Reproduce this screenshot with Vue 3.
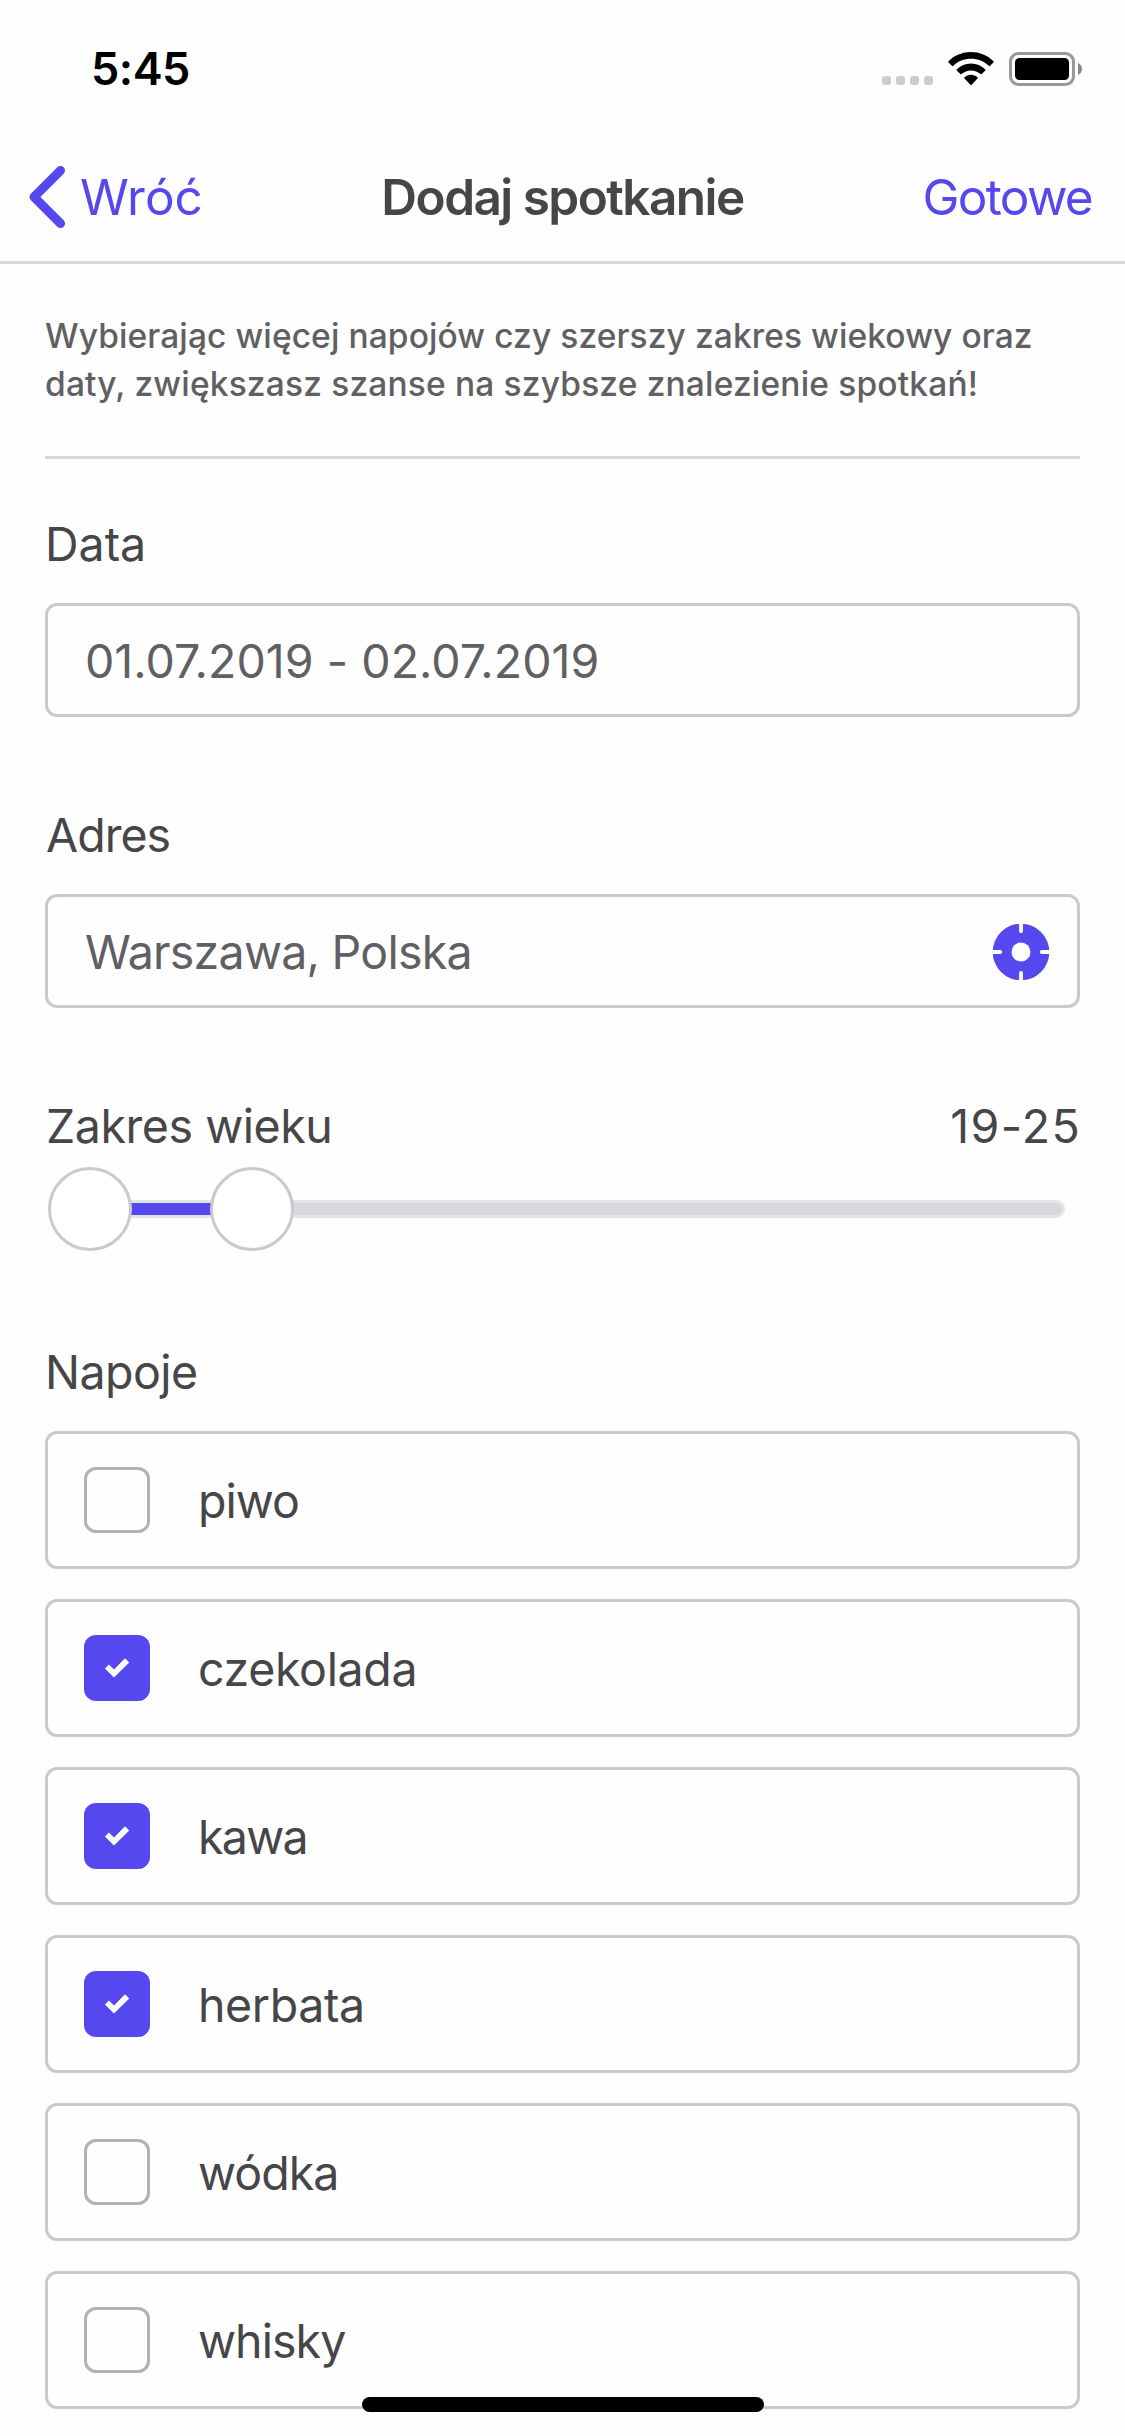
<script setup>
import { ref } from 'vue'

const drinks = ref([
  { name: 'piwo', checked: false, tracking: -1 },
  { name: 'czekolada', checked: true, tracking: -0.34 },
  { name: 'kawa', checked: true, tracking: -1.7 },
  { name: 'herbata', checked: true, tracking: -0.4 },
  { name: 'wódka', checked: false, tracking: -0.95 },
  { name: 'whisky', checked: false, tracking: -0.95 },
])

// Thumb centres, in pixels from the left edge of the slider
const range = { from: 45, to: 207 }
</script>

<template>
  <div class="screen">
    <header class="status">
      <span class="time">5:45</span>
      <div class="indicators">
        <span class="signal"><i v-for="n in 4" :key="n"></i></span>
        <svg class="wifi" width="46" height="34" viewBox="0 0 46 34">
          <path d="M23 0C31.7 0 39.7 3.4 45.5 9.2Q46 9.8 45.4 10.4L41.9 13.9Q41.4 14.4 40.8 13.8C36.1 9.3 29.9 6.8 23 6.8S9.9 9.3 5.2 13.8Q4.6 14.4 4.1 13.9L.6 10.4Q0 9.8.5 9.2C6.3 3.4 14.3 0 23 0Z" />
          <path d="M23 11.6C28.6 11.6 33.6 13.8 37.3 17.5Q37.8 18 37.3 18.6L33.7 22.1Q33.2 22.6 32.6 22.1C30 19.8 26.7 18.4 23 18.4S16 19.8 13.4 22.1Q12.8 22.6 12.3 22.1L8.7 18.6Q8.2 18 8.7 17.5C12.4 13.8 17.4 11.6 23 11.6Z" />
          <path d="M23 22.8C25.5 22.8 27.8 23.7 29.5 25.2Q30.1 25.8 29.5 26.4L23.6 32.7Q23 33.3 22.4 32.7L16.5 26.4Q15.9 25.8 16.5 25.2C18.2 23.7 20.5 22.8 23 22.8Z" />
        </svg>
        <svg class="battery" width="74" height="34" viewBox="0 0 74 34">
          <rect x="1.5" y="1.5" width="63" height="31" rx="8" fill="none" stroke="#999" stroke-width="3" />
          <rect x="6" y="6" width="54" height="22" rx="4.5" />
          <path d="M69 11C71.3 12 73 14.2 73 17S71.3 22 69 23Z" fill="#888" />
        </svg>
      </div>
    </header>

    <nav class="nav">
      <a class="back">
        <svg width="36" height="62" viewBox="0 0 36 62">
          <path d="M31.5 4.5L5 31L31.5 57.5" fill="none" stroke="currentColor" stroke-width="9" stroke-linecap="round" stroke-linejoin="round" />
        </svg>
        <span>Wróć</span>
      </a>
      <h1>Dodaj spotkanie</h1>
      <a class="done">Gotowe</a>
    </nav>

    <main>
      <p class="hint">
        <span>Wybierając więcej napojów czy szerszy zakres wiekowy oraz</span><br />
        <span class="second">daty, zwiększasz szanse na szybsze znalezienie spotkań!</span>
      </p>

      <section class="field first">
        <label>Data</label>
        <div class="input"><span class="date">01.07.2019 - 02.07.2019</span></div>
      </section>

      <section class="field">
        <label class="address-label">Adres</label>
        <div class="input">
          <span class="address">Warszawa, Polska</span>
          <svg class="locate" width="58" height="58" viewBox="0 0 58 58">
            <circle cx="29" cy="29" r="28.3" fill="#5448ee" />
            <circle cx="29" cy="29" r="9.5" fill="#fefefe" />
            <path d="M29 -2V8.2M29 60V49.8M-2 29H8.2M60 29H49.8" stroke="#fefefe" stroke-width="3.8" stroke-linecap="round" />
          </svg>
        </div>
      </section>

      <section class="field">
        <div class="row">
          <label class="age-label">Zakres wieku</label>
          <output>19-25</output>
        </div>
        <div class="slider">
          <div class="track"></div>
          <div class="selected" :style="{ left: range.from + 'px', width: range.to - range.from + 'px' }"></div>
          <div class="thumb" :style="{ left: range.from + 'px' }"></div>
          <div class="thumb" :style="{ left: range.to + 'px' }"></div>
        </div>
      </section>

      <section class="field drinks">
        <label class="drinks-label">Napoje</label>
        <ul>
          <li v-for="drink in drinks" :key="drink.name" @click="drink.checked = !drink.checked">
            <span class="box" :class="{ checked: drink.checked }">
              <svg v-if="drink.checked" width="66" height="66" viewBox="0 0 66 66">
                <path d="M21 33.5L25 29.6L30 34.4L41 23.2L45.2 27.4L30 42.6Z" fill="#fff" />
              </svg>
            </span>
            <span class="name" :style="{ letterSpacing: drink.tracking + 'px' }">{{ drink.name }}</span>
          </li>
        </ul>
      </section>
    </main>

    <div class="home"></div>
  </div>
</template>

<style>
body {
  margin: 0;
  background: #fefefe;
}
</style>

<style scoped>
.screen {
  position: relative;
  width: 1125px;
  height: 2436px;
  overflow: hidden;
  background: #fefefe;
  color: #464649;
  font: 400 46.5px/60px Inter, 'Noto Sans', sans-serif;
}

.status {
  display: flex;
  justify-content: space-between;
  box-sizing: border-box;
  height: 132px;
  padding: 0 42px 0 91px;
  color: #000;
}

.time {
  margin-top: 39px;
  font-size: 45px;
  font-weight: 600;
  letter-spacing: -0.5px;
}

.indicators {
  display: flex;
  align-items: flex-start;
  padding-top: 52px;
}

.signal {
  display: flex;
  gap: 5px;
  margin: 24px 15px 0 0;
}

.signal i {
  width: 9px;
  height: 9px;
  border-radius: 3px;
  background: #ccc;
}

.wifi {
  margin-right: 15px;
}

.nav {
  display: grid;
  grid-template-columns: 1fr auto 1fr;
  align-items: center;
  box-sizing: border-box;
  height: 132px;
  padding: 0 33px 0 29px;
  border-bottom: 3px solid #d8d8dc;
  font-size: 49.5px;
}

.nav h1 {
  margin: 0 -2px 0 2px;
  font-size: 49.5px;
  font-weight: 600;
  letter-spacing: -1.55px;
}

.back,
.done {
  color: #5448ee;
}

.back {
  display: flex;
  align-items: center;
  gap: 15px;
}

.done {
  justify-self: end;
  letter-spacing: -1.7px;
}

main {
  padding: 48px 45px 0;
}

.hint {
  margin: 0;
  padding-bottom: 48px;
  border-bottom: 3px solid #d8d8dc;
  color: #606063;
  font-size: 33.5px;
  font-weight: 450;
  line-height: 48px;
  letter-spacing: 0.1px;
  white-space: nowrap;
}

.hint .second {
  letter-spacing: 0.17px;
}

.field {
  margin-top: 88px;
}

.field.first {
  margin-top: 55px;
}

.field.drinks {
  margin-top: 91px;
}

label {
  display: block;
}

.address-label {
  padding-left: 1px;
  letter-spacing: -0.95px;
}

.age-label {
  padding-left: 1px;
  letter-spacing: -0.45px;
}

.drinks-label {
  letter-spacing: -0.55px;
}

.input {
  display: flex;
  align-items: center;
  justify-content: space-between;
  box-sizing: border-box;
  height: 114px;
  margin-top: 29px;
  padding: 0 27px 0 37px;
  border: 3px solid #c9c9ce;
  border-radius: 12px;
  color: #606063;
}

.input span {
  padding-top: 2px;
}

.date {
  letter-spacing: 0.04px;
}

.address {
  letter-spacing: -0.75px;
}

.locate {
  margin-top: 2px;
}

.row {
  display: flex;
  justify-content: space-between;
}

output {
  margin-right: -1px;
  letter-spacing: 1.3px;
}

.slider {
  position: relative;
  height: 84px;
  margin-top: 11px;
  padding: 33px 15px 0;
  box-sizing: border-box;
}

.track {
  box-sizing: border-box;
  height: 18px;
  border: 3px solid #e5e5e5;
  border-radius: 9px;
  background: #d8d8dc;
}

.selected {
  position: absolute;
  top: 36px;
  height: 12px;
  background: #5448ee;
}

.thumb {
  position: absolute;
  top: 0;
  box-sizing: border-box;
  width: 84px;
  height: 84px;
  margin-left: -42px;
  border: 3px solid #c9c9ce;
  border-radius: 50%;
  background: #fff;
}

ul {
  display: flex;
  flex-direction: column;
  gap: 30px;
  margin: 29px 0 0;
  padding: 0;
  list-style: none;
}

li {
  display: flex;
  align-items: center;
  gap: 48px;
  box-sizing: border-box;
  height: 138px;
  padding: 0 36px;
  border: 3px solid #c9c9ce;
  border-radius: 12px;
}

.box {
  box-sizing: border-box;
  width: 66px;
  height: 66px;
  border: 3px solid #b0b0b5;
  border-radius: 12px;
}

.box.checked {
  border: 0;
  background: #5448ee;
}

.box svg {
  display: block;
}

.name {
  padding-top: 2px;
}

.home {
  position: absolute;
  bottom: 24px;
  left: 362px;
  width: 402px;
  height: 15px;
  border-radius: 8px;
  background: #000;
}
</style>
